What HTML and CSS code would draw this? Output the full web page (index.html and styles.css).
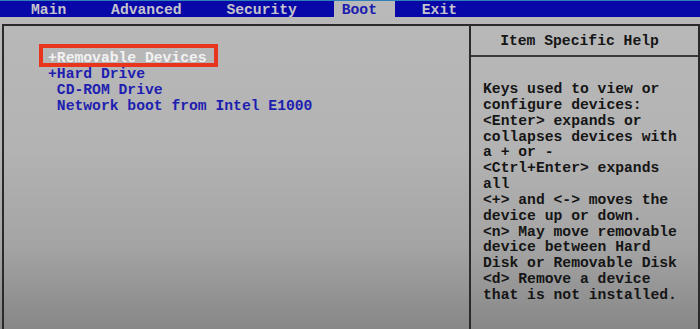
FILE: index.html
```html
<!DOCTYPE html>
<html>
<head>
<meta charset="utf-8">
<link rel="stylesheet" href="styles.css">
</head>
<body>
<div class="menubar">
  <span class="tab">Main</span>
  <span class="tab">Advanced</span>
  <span class="tab">Security</span>
  <span class="tab active">Boot</span>
  <span class="tab">Exit</span>
</div>
<div class="frame">
  <div class="left">
    <div class="item sel">+Removable Devices</div>
    <div class="item">+Hard Drive</div>
    <div class="item"> CD-ROM Drive</div>
    <div class="item"> Network boot from Intel E1000</div>
  </div>
  <div class="right">
    <div class="help-title">Item Specific Help</div>
    <div class="help-body">Keys used to view or
configure devices:
&lt;Enter&gt; expands or
collapses devices with
a + or -
&lt;Ctrl+Enter&gt; expands
all
&lt;+&gt; and &lt;-&gt; moves the
device up or down.
&lt;n&gt; May move removable
device between Hard
Disk or Removable Disk
&lt;d&gt; Remove a device
that is not installed.</div>
  </div>
</div>
</body>
</html>
```
FILE: styles.css
```css
html, body {
  margin: 0;
  padding: 0;
  height: 329px;
  overflow: hidden;
}
body {
  background: linear-gradient(#b9b9b9 0%, #b3b3b3 45%, #a4a4a4 75%, #878787 100%);
  font-family: "Liberation Mono", "DejaVu Sans Mono", monospace;
  font-size: 14.7px;
  font-weight: bold;
}
.menubar {
  height: 16px;
  border-top: 1px solid #2f7fb8;
  background: #0808a8;
  display: flex;
  gap: 18.8px;
  padding-left: 23px;
}
.tab {
  color: #c4c4cc;
  line-height: 18px;
  padding: 0 18px 0 8px;
}
.tab.active {
  background: #b9b9b9;
  color: #1c1cae;
}
.frame {
  margin: 7px 0 0 2px;
  border: 2px solid #2a2a2a;
  border-bottom: none;
  height: 303px;
  display: grid;
  grid-template-columns: 1fr 229px;
}
.left {
  padding: 24px 0 0 44px;
}
.item {
  color: #1e1eb0;
  line-height: 16px;
  white-space: pre;
  width: fit-content;
}
.item.sel {
  color: #f2f2f2;
  position: relative;
}
.item.sel::after {
  content: "";
  position: absolute;
  left: -9px;
  right: -11px;
  top: -6px;
  bottom: -1px;
  border: 4px solid #e8361e;
}
.right {
  border-left: 2px solid #2a2a2a;
}
.help-title {
  height: 27px;
  padding-top: 2px;
  line-height: 27px;
  text-align: center;
  padding-right: 10px;
  color: #151515;
  border-bottom: 2px solid #3a3a3a;
}
.help-body {
  padding: 25px 0 0 12px;
  line-height: 15.85px;
  color: #151515;
  white-space: pre;
}
```
